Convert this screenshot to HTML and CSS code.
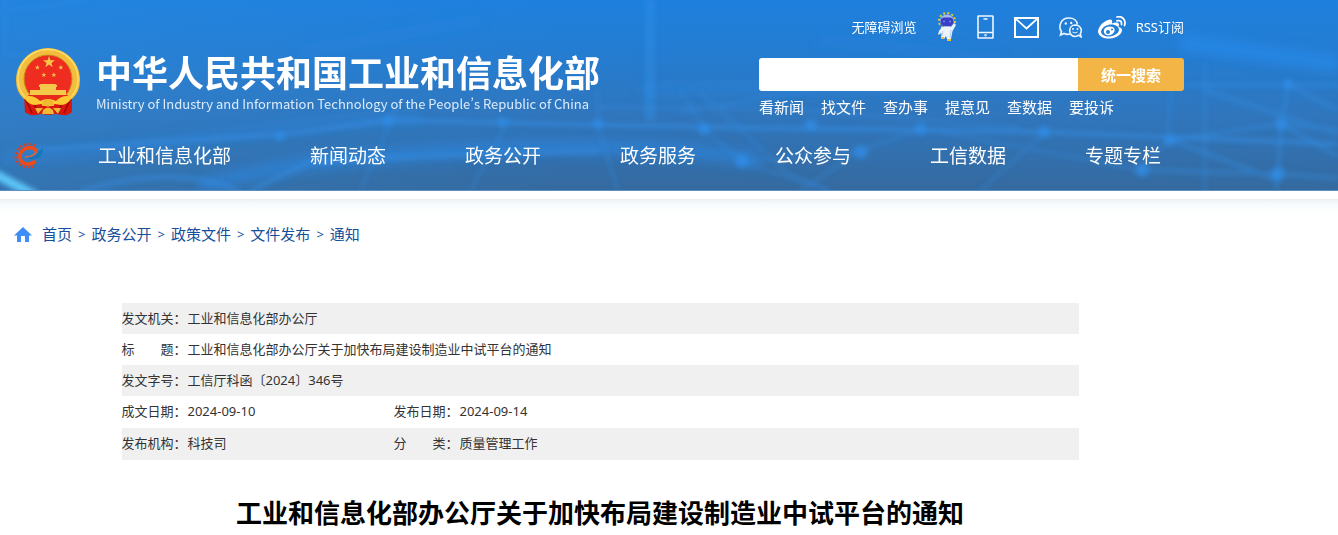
FILE: index.html
```html
<!DOCTYPE html>
<html lang="zh-CN">
<head>
<meta charset="utf-8">
<meta name="viewport" content="width=device-width, initial-scale=1">
<title>工业和信息化部办公厅关于加快布局建设制造业中试平台的通知</title>
<link rel="stylesheet" href="styles.css">
</head>
<body>
<header class="header">
  <svg class="header-art" viewBox="0 0 1338 191" preserveAspectRatio="none" aria-hidden="true">
    <defs>
      <linearGradient id="sky" x1="0" y1="0" x2="0" y2="1">
        <stop offset="0" stop-color="#1e80de"/>
        <stop offset="0.3" stop-color="#257cd0"/>
        <stop offset="0.6" stop-color="#3076bd"/>
        <stop offset="1" stop-color="#356a9f"/>
      </linearGradient>
      <linearGradient id="side" x1="0" y1="0" x2="1" y2="0">
        <stop offset="0" stop-color="#3292e4" stop-opacity="0.25"/>
        <stop offset="1" stop-color="#3292e4" stop-opacity="0"/>
      </linearGradient>
      <filter id="soft" x="-20%" y="-20%" width="140%" height="140%"><feGaussianBlur stdDeviation="2.500"/></filter>
      <filter id="softer" x="-20%" y="-50%" width="140%" height="200%"><feGaussianBlur stdDeviation="6"/></filter>
    </defs>
    <rect width="1338" height="191" fill="url(#sky)"/>
    <rect width="560" height="191" fill="url(#side)"/>
    <g filter="url(#softer)" fill="none" stroke="#2a8df0">
      <path d="M0 158C180 150 260 120 420 118" stroke-width="9" opacity=".35"/>
      <path d="M200 186C300 160 340 158 470 150S700 150 760 160" stroke-width="14" opacity=".5"/>
      <path d="M640 90C760 84 900 100 1080 66" stroke-width="10" opacity=".3"/>
      <path d="M1180 42L1338 64" stroke-width="16" opacity=".6"/>
      <path d="M300 52L480 20M820 40L1000 60" stroke-width="12" opacity=".18"/>
    </g>
    <g filter="url(#soft)" fill="none" stroke="#3390e8">
      <path d="M650 0V120" stroke-width="10" opacity=".4"/>
      <path d="M0 12L90 0M5 0V55H50" stroke-width="4" opacity=".2"/>
      <path d="M30 150L290 134L390 120L600 125L760 128L930 130L1045 132L1338 144" stroke-width="4" opacity=".6"/>
      <path d="M600 107L780 108L1020 128M680 112L820 88M700 92L790 175L830 191" stroke-width="3" opacity=".35"/>
      <path d="M400 100L360 191M510 118L470 191M598 90V125L618 191M680 90L706 130L742 162L830 191" stroke-width="3" opacity=".32"/>
      <path d="M750 162L860 150L920 130M860 150L800 191M930 130L1140 170M1045 132L980 191M1172 65L1168 140L1142 170M1205 62V191" stroke-width="3" opacity=".35"/>
      <path d="M1140 170L1278 174L1338 178M1170 140L1280 124L1338 130M1185 85H1338M1288 85L1281 124L1278 174L1276 191M1205 90L1338 134M1281 124L1338 156M1170 140L1278 180M1288 85L1338 110" stroke-width="4" opacity=".4"/>
      <path d="M80 191C150 172 190 172 240 191M250 191L310 162L420 156L600 151" stroke-width="5" opacity=".45"/>
      <g fill="#2e91ef" stroke="none" opacity=".65">
        <circle cx="280" cy="136" r="5"/><circle cx="388" cy="121" r="5"/><circle cx="502" cy="122" r="5"/><circle cx="598" cy="124" r="5"/><circle cx="704" cy="129" r="6"/><circle cx="742" cy="161" r="7"/><circle cx="811" cy="125" r="6"/><circle cx="921" cy="129" r="6"/><circle cx="861" cy="152" r="7"/><circle cx="1044" cy="132" r="6"/><circle cx="1170" cy="140" r="6"/><circle cx="1142" cy="170" r="7"/><circle cx="1281" cy="124" r="6"/><circle cx="1278" cy="174" r="7"/><circle cx="1288" cy="84" r="5"/>
      </g>
      <path d="M-5 174L36 196" stroke="#5bc5f7" stroke-width="9"/>
    </g>
    <path d="M0 190.500H1338" stroke="#5f8fbe" stroke-width="1"/>
  </svg>

  <div class="header-inner">
    <div class="masthead">
      <a class="brand" href="#">
        <svg class="emblem" viewBox="0 0 64 68" role="img" aria-label="国徽">
          <path d="M8 48L9 64Q14 69 25 66L32 67L40 66Q52 69 56 64V48Z" fill="#d9170f"/>
          <path d="M10 52L16 65M18 54L22 66M54 52L48 65M46 54L42 66" stroke="#9d0806" stroke-width="1.500"/>
          <path d="M32 0C49 0 64 14 64 32Q64 44 56 51L49 52H15L8 51Q0 44 0 32C0 14 15 0 32 0Z" fill="#f2bd3c"/>
          <path d="M32 1.500C48 1.500 62 14 62 31Q62 42 55 49M32 1.500C16 1.500 2 14 2 31Q2 42 9 49" fill="none" stroke="#ffdc68" stroke-width="1.500"/>
          <circle cx="32" cy="31" r="24" fill="#ee2d20"/>
          <circle cx="32" cy="31" r="24" fill="none" stroke="#c88d21"/>
          <g fill="#f4c94a">
            <path id="star" d="M33 8L34.400 12.300H39L35.400 15L36.700 19.200L33 16.600L29.300 19.200L30.600 15L27 12.300H31.600Z"/>
            <use href="#star" transform="translate(7.500 13.500) scale(.42)"/>
            <use href="#star" transform="translate(31 13.500) scale(.42)"/>
            <use href="#star" transform="translate(14 21) scale(.42)"/>
            <use href="#star" transform="translate(24 21) scale(.42)"/>
            <path d="M23 37L25 36H39L41 37V39H40V42H50V47H14V42H24V39H23Z"/>
            <path d="M12 47H52L50 52H14Z" fill="#e6291a"/>
          </g>
          <path d="M8 49Q17 46 24 53Q32 49 40 53Q47 46 56 49Q52 57 45 57L39 56Q32 61 25 56L19 57Q12 57 8 49Z" fill="#ffc934"/>
          <path d="M27 53Q32 49 37 53L38 58H26ZM19 60L27 60L22 66ZM45 60L37 60L42 66ZM27 62Q32 57 37 62L38 66H26Z" fill="#f1b833"/>
        </svg>
        <span class="brand-text">
          <span class="brand-name">中华人民共和国工业和信息化部</span>
          <span class="brand-sub" lang="en">Ministry of Industry and Information Technology of the People’s Republic of China</span>
        </span>
      </a>

      <div class="tools">
        <div class="quick">
          <a href="#">无障碍浏览</a>
          <a href="#" aria-label="智能机器人">
            <svg width="20" height="30" viewBox="0 0 20 30">
              <circle cx="10" cy="9" r="8" fill="none" stroke="#e5cf2d" stroke-width="2" stroke-dasharray="2 2.200"/>
              <ellipse cx="10" cy="9" rx="7" ry="6.500" fill="#a9b9e6"/>
              <rect x="3.500" y="5.500" width="13" height="8.500" rx="4" fill="#3b3fc4"/>
              <path d="M6 9.500H8M12 9.500H14" stroke="#5f86f5" stroke-width="1.500"/>
              <path d="M5 15H14L17 11L19 13L15.500 19L14 27H10L9 24L7 27H4L4.500 21L1 23L2 19Z" fill="#edf3fc"/>
              <path d="M4 25H7V27H4ZM10 27H14V29H10Z" fill="#f4bb36"/>
              <path d="M14 18L13 26M6 19L5 24" stroke="#b8cce8"/>
            </svg>
          </a>
          <a href="#" aria-label="手机版">
            <svg width="17" height="24" viewBox="0 0 17 24" fill="none" stroke="#eef6ff" stroke-width="1.600">
              <rect x="1" y="1" width="15" height="22" rx=".5"/><path d="M1 17.500H16M6.500 4H10.500"/><circle cx="8.500" cy="20.300" r=".4"/>
            </svg>
          </a>
          <a href="#" aria-label="邮箱">
            <svg width="25" height="21" viewBox="0 0 25 21" fill="none" stroke="#fff" stroke-width="2">
              <path d="M1 1H24V20H1Z"/><path d="M2 2L12.500 11.500L23 2" stroke-width="1.700"/>
            </svg>
          </a>
          <div class="social">
            <a href="#" aria-label="微信">
              <svg width="23" height="21" viewBox="0 0 23 21" fill="none" stroke="#eef6ff" stroke-width="1.600">
                <path d="M11 17Q8 18 5 16.500L1.500 18L2.500 14.500C-.5 11 .5 1 10 1C15 1 18 4 18.300 7.500"/>
                <path d="M19.800 18.300L22 19.800L21.300 16.800C24 12 20.500 8 16.300 8C8.500 8.300 9 19.800 16.500 19.500Q18 19.300 19.800 18.300Z"/>
                <g fill="#eef6ff" stroke="none"><circle cx="6.800" cy="6.500" r="1.200"/><circle cx="12.200" cy="6" r="1.200"/><circle cx="14" cy="12" r="1"/><circle cx="18.500" cy="12" r="1"/></g>
                <path d="M13.500 15Q16 17 18.500 15" stroke-width="1"/>
              </svg>
            </a>
            <div class="feeds">
              <a href="#" aria-label="微博">
                <svg width="28" height="23" viewBox="0 0 28 23">
                  <path fill="#fff" fill-rule="evenodd" d="M10 4C4 6 0 12 0 16C1 21 7 23 12 22.500C19 22 24 18 24 14Q24 12 20.500 11Q22 7 19 6.500Q17 6 14 7.500Q15 2 10 4ZM10 9C16 7.500 21 10 21 14C20.500 18 15 20.500 10.500 20.500C6 20.500 3 18 3 15.500Q4 10.500 10 9Z"/>
                  <path fill="#fff" fill-rule="evenodd" d="M11 10.500C6 11 5 15 6.500 17.500C8 20 13 20 15.500 17C18.500 13 15.500 10 11 10.500ZM10 14A2 2 0 1 0 10 18A2 2 0 1 0 10 14ZM14 12.500A1 1 0 1 0 14 14.500A1 1 0 1 0 14 12.500Z"/>
                  <path d="M19 1C24-.5 28.500 4 26.500 9.500M19 4.800Q24 3.500 23.500 8.500" fill="none" stroke="#fff" stroke-width="1.800" stroke-linecap="round"/>
                </svg>
              </a>
              <a href="#">RSS订阅</a>
            </div>
          </div>
        </div>
        <form class="search">
          <input class="search-box" type="text" aria-label="搜索">
          <button class="search-btn" type="button">统一搜索</button>
        </form>
        <div class="hot">
          <a href="#">看新闻</a><a href="#">找文件</a><a href="#">查办事</a><a href="#">提意见</a><a href="#">查数据</a><a href="#">要投诉</a>
        </div>
      </div>
    </div>

    <nav class="nav">
      <a class="nav-logo" href="#" aria-label="首页">
        <svg width="30" height="26" viewBox="0 0 30 26" fill="none">
          <path d="M21 2.500C12-1.500 1.500 4 1.500 13C1.500 22.500 13 27 22 22.500" stroke="#e63e17" stroke-width="2.200" stroke-dasharray="2.200 2.200"/>
          <path d="M22.500 9C21 3.500 13 3.500 8.500 7.500C4 12 5.500 19.500 12 20.800C16 21.500 19 20.500 21.500 18" stroke="#f04b16" stroke-width="3.600"/>
          <path d="M11 13.800C15 14.500 20 12.500 23 8.500" stroke="#e2603a" stroke-width="2"/>
          <path d="M12 14.500C18 15 23 12.500 24.500 7.500L29 6C29.500 14 20 19.500 12 14.500Z" fill="#1378bd"/>
        </svg>
      </a>
      <a class="nav-item nav-item-wide" href="#">工业和信息化部</a>
      <a class="nav-item" href="#">新闻动态</a>
      <a class="nav-item" href="#">政务公开</a>
      <a class="nav-item" href="#">政务服务</a>
      <a class="nav-item" href="#">公众参与</a>
      <a class="nav-item" href="#">工信数据</a>
      <a class="nav-item nav-item-last" href="#">专题专栏</a>
    </nav>
  </div>
</header>
<div class="divider"></div>

<main class="page">
  <nav class="crumbs" aria-label="当前位置">
    <svg class="home" width="18" height="15" viewBox="0 0 18 15" aria-hidden="true"><path fill="#3f8ef7" d="M9 0L18 8.500H15V15H11V9H7V15H3V8.500H0Z"/></svg>
    <a href="#">首页</a><span class="sep">&gt;</span><a href="#">政务公开</a><span class="sep">&gt;</span><a href="#">政策文件</a><span class="sep">&gt;</span><a href="#">文件发布</a><span class="sep">&gt;</span><a href="#">通知</a>
  </nav>

  <table class="meta">
    <colgroup><col class="col-label"><col class="col-value"><col class="col-label"><col></colgroup>
    <tbody>
      <tr><th scope="row">发文机关：</th><td colspan="3">工业和信息化部办公厅</td></tr>
      <tr><th scope="row">标　　题：</th><td colspan="3">工业和信息化部办公厅关于加快布局建设制造业中试平台的通知</td></tr>
      <tr><th scope="row">发文字号：</th><td colspan="3">工信厅科函〔2024〕346号</td></tr>
      <tr class="tall"><th scope="row">成文日期：</th><td>2024-09-10</td><th scope="row">发布日期：</th><td>2024-09-14</td></tr>
      <tr class="tall"><th scope="row">发布机构：</th><td>科技司</td><th scope="row">分　　类：</th><td>质量管理工作</td></tr>
    </tbody>
  </table>

  <h1 class="title">工业和信息化部办公厅关于加快布局建设制造业中试平台的通知</h1>
</main>
</body>
</html>
```
FILE: styles.css
```css
* { box-sizing: border-box; }

body {
  margin: 0;
  background: #fff;
  color: #333;
  font-family: "Noto Sans", "Noto Sans CJK SC", sans-serif;
  font-size: 13px;
}

a { color: inherit; text-decoration: none; }
svg { display: block; }

.header {
  position: relative;
  color: #fff;
  background: #2f78c0;
}

.header-art {
  position: absolute;
  inset: 0;
  width: 100%;
  height: 100%;
}

.header-inner {
  position: relative;
  max-width: 1184px;
  padding: 12px 0 16px 14px;
}

.masthead {
  display: flex;
  justify-content: space-between;
}

.brand {
  display: flex;
  gap: 16px;
  padding: 36px 0 0 2px;
}

.emblem { width: 64px; height: 68px; }

.brand-text {
  display: flex;
  flex-direction: column;
  font-family: "Noto Sans CJK SC", sans-serif;
  white-space: nowrap;
}

.brand-name { font-size: 36px; line-height: 46px; font-weight: 700; }

.brand-sub {
  color: #dcebfb;
  font-size: 13px;
  line-height: 20px;
  font-variant-east-asian: proportional-width;
}

.tools { width: 425px; }

.quick {
  display: flex;
  align-items: center;
  justify-content: flex-end;
  gap: 20px;
  height: 30px;
  line-height: 18px;
}

.social { display: flex; align-items: center; gap: 16px; }
.feeds { display: flex; align-items: center; gap: 10px; }

.search { display: flex; height: 33px; margin: 16px 0 0; }

.search-box {
  flex: 1;
  min-width: 0;
  padding: 0 10px;
  border: 0;
  border-radius: 3px 0 0 3px;
  background: #fff;
  font: inherit;
}

.search-btn {
  width: 106px;
  padding: 0;
  border: 0;
  border-radius: 0 3px 3px 0;
  background: #f3b646;
  color: #fff;
  font-family: inherit;
  font-size: 15px;
  font-weight: 700;
}

.hot {
  display: flex;
  gap: 17px;
  padding-top: 4px;
  font-size: 15px;
  line-height: 24px;
}

.nav {
  display: flex;
  align-items: center;
  height: 38px;
  margin-top: 18px;
}

.nav-logo { flex: none; width: 84px; }
.nav-item { flex: none; width: 155px; font-size: 19px; line-height: 38px; }
.nav-item-wide { width: 212px; }
.nav-item-last { width: auto; }

.divider {
  height: 16px;
  margin-top: 8px;
  background: linear-gradient(#eceff2, #f7fafc 30%, #fff);
}

.page { max-width: 1200px; }

.crumbs {
  display: flex;
  align-items: center;
  gap: 6px;
  padding: 7px 14px 0;
  color: #164f9b;
  font-size: 15px;
  line-height: 24px;
}

.home { margin-right: 4px; }
.sep { font-size: 13px; }

.meta {
  width: 957px;
  max-width: 100%;
  margin: 57px auto 0;
  border-collapse: collapse;
  table-layout: fixed;
}

.col-label { width: 66px; }
.col-value { width: 206px; }

.meta tr { height: 31px; }
.meta .tall { height: 32px; }
.meta tr:nth-child(odd) { background: #f0f0f0; }

.meta th,
.meta td {
  padding: 0 0 2px;
  font-weight: 400;
  line-height: 20px;
  text-align: left;
  white-space: nowrap;
}

.title {
  margin: 34px 0 0;
  color: #000;
  font-size: 26px;
  line-height: 38px;
  text-align: center;
}
```
